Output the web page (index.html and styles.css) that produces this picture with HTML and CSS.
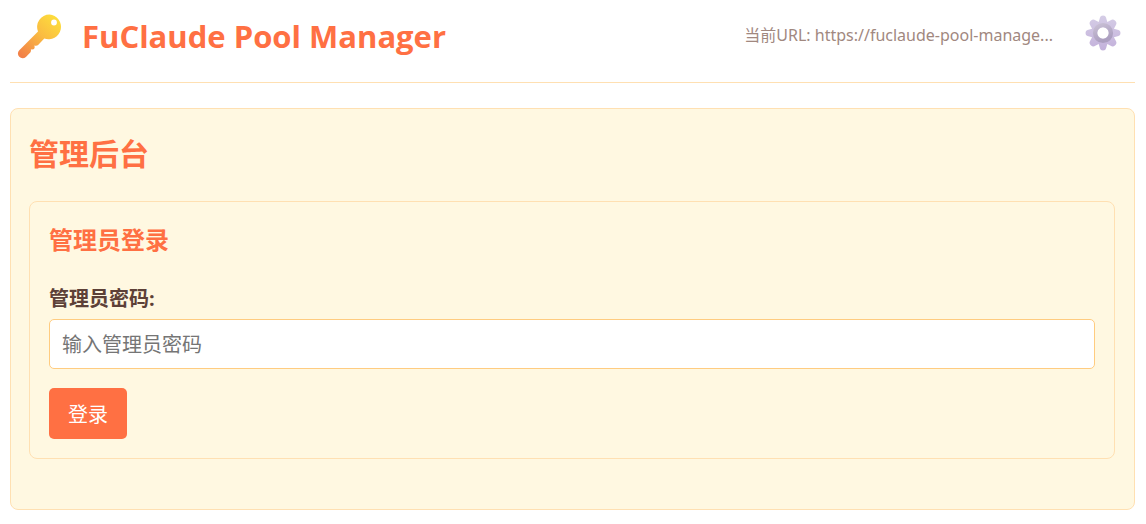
FILE: index.html
```html
<!DOCTYPE html>
<html lang="zh-CN">
<head>
<meta charset="utf-8">
<meta name="viewport" content="width=device-width, initial-scale=1">
<title>FuClaude Pool Manager</title>
<link rel="stylesheet" href="styles.css">
</head>
<body>
<header class="header">
  <svg class="logo" viewBox="0 0 48 48" aria-hidden="true">
    <defs>
      <linearGradient id="key" x1="40" y1="6" x2="6" y2="44" gradientUnits="userSpaceOnUse">
        <stop offset="0" stop-color="#fddc3c"/>
        <stop offset="0.45" stop-color="#fabb42"/>
        <stop offset="1" stop-color="#f28148"/>
      </linearGradient>
    </defs>
    <path fill="url(#key)" fill-rule="evenodd" d="M33.500 2.500A12.400 12.400 0 0 0 22 19.500L3.300 38.200A4.700 4.700 0 0 0 9.900 44.900L14.500 40.300Q15.200 38.900 14.900 37.300Q17.600 37.700 18.500 36.200Q18.900 34.900 18.300 33.400Q20.700 34.200 22.100 32.900L28.300 26.500A12.400 12.400 0 1 0 33.500 2.500ZM38 7.600A2.900 2.900 0 1 1 38 13.400A2.900 2.900 0 1 1 38 7.600Z"/>
  </svg>
  <h1 class="title">FuClaude Pool Manager</h1>
  <span class="url">当前URL: https://fuclaude-pool-manage...</span>
  <button class="settings" type="button" aria-label="设置">
    <svg class="gear" viewBox="0 0 36 36" aria-hidden="true">
      <defs>
        <linearGradient id="teeth" x1="0" y1="0" x2="0" y2="1">
          <stop offset="0" stop-color="#d5cde6"/>
          <stop offset="1" stop-color="#c3b1db"/>
        </linearGradient>
        <linearGradient id="ring" x1="0" y1="0" x2="0.400" y2="1">
          <stop offset="0" stop-color="#c8bfd4"/>
          <stop offset="1" stop-color="#ac9fc0"/>
        </linearGradient>
      </defs>
      <path fill="url(#teeth)" fill-rule="evenodd" d="M15 2.500Q15.400 .5 18 .5Q20.600 .5 21 2.500L22.300 7.100L25.700 5.200Q28 3.600 30.200 5.800Q32.400 8 30.800 10.300L28.900 13.700L33.500 15Q35.500 15.400 35.500 18Q35.500 20.600 33.500 21L28.900 22.300L30.800 25.700Q32.400 28 30.200 30.200Q28 32.400 25.700 30.800L22.300 28.900L21 33.500Q20.600 35.500 18 35.500Q15.400 35.500 15 33.500L13.700 28.900L10.300 30.800Q8 32.400 5.800 30.200Q3.600 28 5.200 25.700L7.100 22.300L2.500 21Q.5 20.600 .5 18Q.5 15.400 2.500 15L7.100 13.700L5.200 10.300Q3.600 8 5.800 5.800Q8 3.600 10.300 5.200L13.700 7.100ZM18 12A6 6 0 1 0 18 24A6 6 0 1 0 18 12Z"/>
      <circle cx="18" cy="18" r="7.900" fill="none" stroke="url(#ring)" stroke-width="4.400"/>
    </svg>
  </button>
</header>
<main class="panel">
  <h2 class="panel-title">管理后台</h2>
  <form class="login">
    <h3 class="login-title">管理员登录</h3>
    <label class="label" for="password">管理员密码:</label>
    <input class="input" id="password" type="password" placeholder="输入管理员密码">
    <button class="submit" type="button">登录</button>
  </form>
</main>
</body>
</html>
```
FILE: styles.css
```css
* {
  box-sizing: border-box;
}

body {
  margin: 0;
  padding: 0 11px 14px 10px;
  background: #fff;
  color: #5d4037;
  font-family: "Open Sans", "Noto Sans CJK SC", sans-serif;
  font-size: 20px;
  line-height: 30px;
}

h1,
h2,
h3 {
  margin: 0;
  color: #ff7043;
  font-weight: 700;
}

.header {
  display: flex;
  align-items: center;
  height: 83px;
  padding: 0 14px 10px 6px;
  border-bottom: 1px solid #ffe0b2;
}

.logo {
  flex: none;
  width: 48px;
  height: 48px;
}

.title {
  margin-left: 18px;
  font-size: 31px;
  line-height: 40px;
  white-space: nowrap;
}

.url {
  margin-left: auto;
  padding-bottom: 2px;
  color: #a1887f;
  font-family: "Noto Sans", "Noto Sans CJK SC", sans-serif;
  font-size: 16px;
  line-height: 24px;
  white-space: nowrap;
}

.settings {
  display: flex;
  flex: none;
  margin-left: 32px;
  padding: 0 0 6px;
  border: 0;
  background: none;
  cursor: pointer;
}

.gear {
  width: 36px;
  height: 36px;
}

.panel {
  margin-top: 25px;
  padding: 24px 19px 50px 18px;
  border: 1px solid #ffe0b2;
  border-radius: 8px;
  background: #fff8e1;
}

.panel-title {
  margin-bottom: 26px;
  font-size: 30px;
  line-height: 42px;
}

.login {
  padding: 20px 19px 19px;
  border: 1px solid #ffe0b2;
  border-radius: 8px;
}

.login-title {
  margin-bottom: 26px;
  font-size: 24px;
  line-height: 36px;
}

.label {
  display: block;
  margin-bottom: 5px;
  font-weight: 700;
}

.input {
  display: block;
  width: 100%;
  height: 50px;
  margin-bottom: 19px;
  padding: 0 12px;
  border: 1px solid #ffcc80;
  border-radius: 5px;
  background: #fff;
  color: #5d4037;
  font: inherit;
}

.input::placeholder {
  color: #757575;
}

.submit {
  display: block;
  height: 51px;
  padding: 3px 19px 0;
  border: 0;
  border-radius: 5px;
  background: #ff7043;
  color: #fff;
  font: inherit;
  cursor: pointer;
}
```
